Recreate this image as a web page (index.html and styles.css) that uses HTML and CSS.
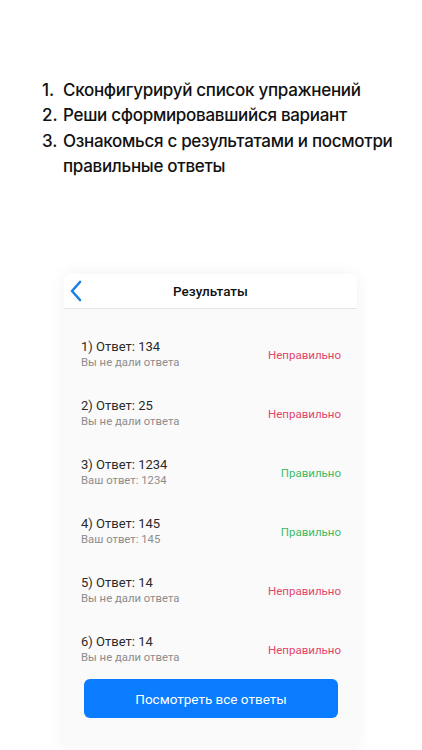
FILE: index.html
```html
<!DOCTYPE html>
<html lang="ru">
<head>
<meta charset="utf-8">
<link rel="stylesheet" href="styles.css">
</head>
<body>
<div class="page">
  <ol class="steps">
    <li><span class="num">1.</span><span class="txt">Сконфигурируй список упражнений</span></li>
    <li><span class="num">2.</span><span class="txt">Реши сформировавшийся вариант</span></li>
    <li><span class="num">3.</span><span class="txt">Ознакомься с результатами и посмотри правильные ответы</span></li>
  </ol>
  <div class="card">
    <div class="header">
      <svg class="back" width="14" height="22" viewBox="0 0 14 22"><path d="M11 2 L3 11 L11 20" fill="none" stroke="#1a7ee8" stroke-width="2.6" stroke-linecap="round" stroke-linejoin="round"/></svg>
      <div class="title">Результаты</div>
    </div>
    <div class="list">
      <div class="row"><div class="info"><div class="ans">1) Ответ: 134</div><div class="sub">Вы не дали ответа</div></div><div class="status bad">Неправильно</div></div>
      <div class="row"><div class="info"><div class="ans">2) Ответ: 25</div><div class="sub">Вы не дали ответа</div></div><div class="status bad">Неправильно</div></div>
      <div class="row"><div class="info"><div class="ans">3) Ответ: 1234</div><div class="sub">Ваш ответ: 1234</div></div><div class="status good">Правильно</div></div>
      <div class="row"><div class="info"><div class="ans">4) Ответ: 145</div><div class="sub">Ваш ответ: 145</div></div><div class="status good">Правильно</div></div>
      <div class="row"><div class="info"><div class="ans">5) Ответ: 14</div><div class="sub">Вы не дали ответа</div></div><div class="status bad">Неправильно</div></div>
      <div class="row"><div class="info"><div class="ans">6) Ответ: 14</div><div class="sub">Вы не дали ответа</div></div><div class="status bad">Неправильно</div></div>
      <button class="btn">Посмотреть все ответы</button>
    </div>
  </div>
</div>
</body>
</html>
```

FILE: styles.css
```css
html, body {
  margin: 0;
  padding: 0;
  background: #ffffff;
}
.page {
  width: 422px;
  height: 750px;
  overflow: hidden;
  display: flex;
  flex-direction: column;
  align-items: flex-start;
}
.steps {
  list-style: none;
  margin: 78px 0 0 0;
  padding: 0 0 0 42px;
  font-family: Inter, "Noto Sans", sans-serif;
  font-size: 17px;
  font-weight: 500;
  line-height: 25.3px;
  color: #111;
  box-sizing: border-box;
}
.steps li {
  display: flex;
}
.num {
  width: 21px;
  flex: none;
}
.txt {
  width: 340px;
  letter-spacing: -0.3px;
}
.card {
  margin: 95px 0 0 64px;
  width: 293px;
  flex: 1;
  background: #fafafa;
  border-radius: 6px 6px 0 0;
  box-shadow: 0 0 18px rgba(0,0,0,0.06);
  display: flex;
  flex-direction: column;
}
.header {
  position: relative;
  height: 34px;
  background: #fff;
  border-radius: 6px 6px 0 0;
  border-bottom: 1px solid #e6e6e6;
  display: flex;
  align-items: center;
  justify-content: center;
}
.back {
  position: absolute;
  left: 5px;
  top: 6px;
}
.title {
  font-family: Roboto, sans-serif;
  font-weight: 500;
  font-size: 13.5px;
  color: #111;
}
.list {
  padding-top: 16px;
  display: flex;
  flex-direction: column;
}
.row {
  height: 59px;
  display: flex;
  align-items: center;
  justify-content: space-between;
  padding: 0 16px 0 17px;
  font-family: Roboto, sans-serif;
}
.ans {
  font-size: 13px;
  color: #2a2a2a;
  line-height: 16px;
}
.sub {
  font-size: 11.3px;
  color: #8c8c8c;
  line-height: 15px;
}
.status {
  font-size: 11.5px;
  margin-top: 1px;
}
.bad { color: #e2456b; }
.good { color: #3fbb63; }
.btn {
  margin: 0 19px 0 20px;
  height: 39px;
  border: none;
  border-radius: 6px;
  background: #0a7cff;
  color: #fff;
  font-family: Roboto, sans-serif;
  font-size: 13.5px;
}
```
